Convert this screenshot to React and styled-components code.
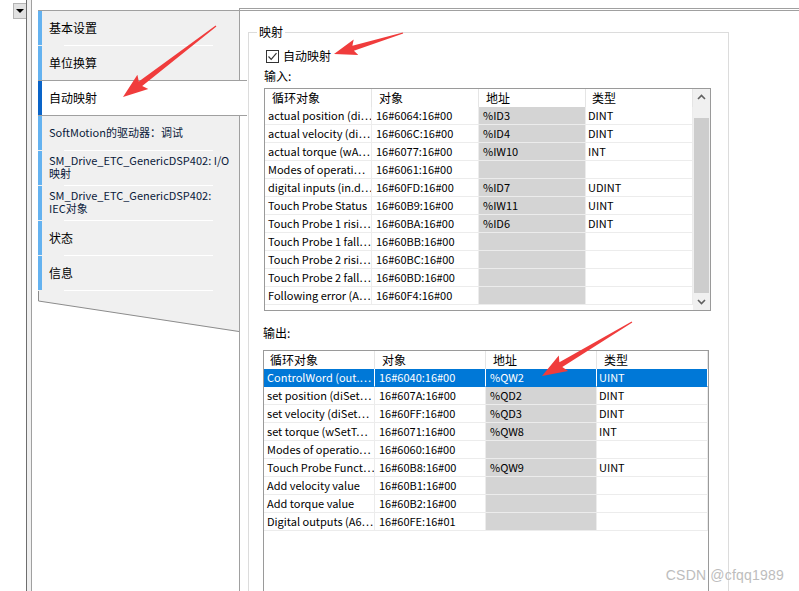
import React from 'react';
import styled, { createGlobalStyle } from 'styled-components';

const UI_FONT = '"Noto Sans CJK SC", "Noto Sans", sans-serif';

const GlobalStyle = createGlobalStyle`
  html, body {
    margin: 0;
    padding: 0;
    background: #fff;
  }
  body {
    font-family: ${UI_FONT};
    font-size: 12px;
    color: #000;
  }
`;

const Window = styled.div`
  position: relative;
  width: 799px;
  height: 591px;
  display: flex;
  overflow: hidden;
  background: #fff;
`;

const Gutter = styled.div`
  width: 26px;
  flex: none;
  display: flex;
  justify-content: flex-end;
  align-items: flex-start;
  padding-top: 3px;
  box-sizing: border-box;
`;

const DropButton = styled.div`
  width: 13px;
  height: 16px;
  box-sizing: border-box;
  background: #e1e1e1;
  border: 1px solid #b4b4b4;
  border-right: none;
  display: flex;
  align-items: center;
  justify-content: center;

  &::after {
    content: '';
    border-left: 4px solid transparent;
    border-right: 4px solid transparent;
    border-top: 4px solid #000;
  }
`;

const Splitter = styled.div`
  width: 6px;
  flex: none;
  box-sizing: border-box;
  background: #f0f0f0;
  border-left: 1px solid #6e6e6e;
  border-right: 1px solid #a0a0a0;
`;

const TabColumn = styled.div`
  width: 207px;
  flex: none;
  padding: 10px 0 0 6px;
  box-sizing: border-box;
  position: relative;
  z-index: 2;
`;

const TabStrip = styled.div`
  display: flex;
  flex-direction: column;
  border-top: 1px solid #a0a0a0;
`;

const Tab = styled.div`
  position: relative;
  height: ${p => (p.$selected ? 36 : p.$sep ? 35 : 34)}px;
  box-sizing: border-box;
  background: ${p => (p.$selected ? '#fff' : '#f0f0f0')};
  margin-right: ${p => (p.$selected ? '-8px' : '0')};
  border-top: ${p => (p.$selected ? '1px solid #a0a0a0' : 'none')};
  border-bottom: ${p => (p.$selected ? '1px solid #a0a0a0' : 'none')};
  padding: 0 2px ${p => (p.$sep ? 3 : 2)}px 11px;
  display: flex;
  flex-direction: column;
  justify-content: center;
  font-size: ${p => (p.$latin ? 11 : 12)}px;
  line-height: 13px;
  white-space: nowrap;
  color: ${p => (p.$latin ? '#0a1a3a' : '#000')};

  &::before {
    content: '';
    position: absolute;
    left: 0;
    top: 0;
    bottom: ${p => (p.$sep ? 1 : 0)}px;
    width: 4px;
    background: ${p => (p.$selected ? '#0a64c8' : '#64b2f0')};
  }

  &::after {
    content: '';
    display: ${p => (p.$sep ? 'block' : 'none')};
    position: absolute;
    left: 26px;
    right: 26px;
    bottom: 0;
    height: 1px;
    background: #fff;
  }
`;

const TabLine = styled.div`
  height: 13px;
`;

const TabFoot = styled.svg`
  display: block;
`;

const Content = styled.div`
  flex: 1;
  margin-top: 8px;
  border-top: 3px double #a0a0a0;
  border-left: 1px solid #a0a0a0;
  padding: 21px 0 0 8px;
  display: flex;
  flex-direction: column;
  min-width: 0;
`;

const GroupBox = styled.div`
  position: relative;
  width: 481px;
  flex: 1;
  box-sizing: border-box;
  border: 1px solid #dcdcdc;
  border-bottom: none;
  padding: 16px 0 0 0;
  display: flex;
  flex-direction: column;
`;

const GroupLegend = styled.span`
  position: absolute;
  top: -9px;
  left: 8px;
  padding: 0 2px;
  background: #fff;
  font-size: 12px;
  line-height: 15px;
`;

const CheckRow = styled.label`
  display: flex;
  align-items: center;
  gap: 4px;
  margin-left: 17px;
  height: 14px;
  font-size: 12px;
  line-height: 14px;
`;

const CheckBox = styled.span`
  width: 13px;
  height: 13px;
  box-sizing: border-box;
  border: 1px solid #333;
  background: #fff;
  display: flex;
  align-items: center;
  justify-content: center;
`;

const SectionLabel = styled.div`
  margin: ${p => p.$top}px 0 0 ${p => p.$left}px;
  font-size: 12px;
  line-height: 16px;
`;

const ListView = styled.div`
  margin: ${p => p.$top}px 0 0 ${p => p.$left}px;
  width: ${p => p.$width}px;
  height: ${p => p.$height}px;
  flex: none;
  box-sizing: border-box;
  border: 1px solid #9a9a9a;
  display: flex;
  background: #fff;
`;

const Grid = styled.div`
  display: grid;
  grid-template-columns: ${p => p.$cols};
  grid-auto-rows: 18px;
  align-content: start;
`;

const HeadCell = styled.div`
  box-sizing: border-box;
  border-right: 1px solid #e5e5e5;
  padding-left: ${p => p.$pad}px;
  font-size: 12px;
  line-height: 18px;
  white-space: nowrap;
  overflow: hidden;
`;

const Cell = styled.div`
  box-sizing: border-box;
  border-right: 1px solid ${p => (p.$sel ? '#fff' : '#ececec')};
  border-bottom: 1px solid ${p => (p.$sel ? '#0078d7' : '#ececec')};
  background: ${p => (p.$sel ? '#0078d7' : p.$addr ? '#d4d4d4' : '#fff')};
  color: ${p => (p.$sel ? '#fff' : '#000')};
  padding-left: ${p => p.$pad}px;
  font-size: 11px;
  line-height: 17px;
  white-space: nowrap;
  overflow: hidden;
`;

const ScrollBar = styled.div`
  width: 17px;
  flex: none;
  background: #f0f0f0;
  display: flex;
  flex-direction: column;
  align-items: center;
`;

const ScrollArrow = styled.div`
  height: 17px;
  display: flex;
  align-items: center;
  justify-content: center;
`;

const ScrollThumb = styled.div`
  margin-top: 12px;
  width: 15px;
  height: 176px;
  background: #cdcdcd;
`;

const Watermark = styled.div`
  position: absolute;
  right: 15px;
  bottom: 8px;
  font-family: "Liberation Sans", sans-serif;
  font-size: 14px;
  color: #bdbdbd;
  text-shadow: 0 0 1px #fff;
  letter-spacing: 0.2px;
`;

const Annotations = styled.svg`
  position: absolute;
  left: 0;
  top: 0;
  pointer-events: none;
  z-index: 5;
`;

const inputRows = [
  ['actual position (di…', '16#6064:16#00', '%ID3', 'DINT'],
  ['actual velocity (di…', '16#606C:16#00', '%ID4', 'DINT'],
  ['actual torque (wA…', '16#6077:16#00', '%IW10', 'INT'],
  ['Modes of operati…', '16#6061:16#00', '', ''],
  ['digital inputs (in.d…', '16#60FD:16#00', '%ID7', 'UDINT'],
  ['Touch Probe Status', '16#60B9:16#00', '%IW11', 'UINT'],
  ['Touch Probe 1 risi…', '16#60BA:16#00', '%ID6', 'DINT'],
  ['Touch Probe 1 fall…', '16#60BB:16#00', '', ''],
  ['Touch Probe 2 risi…', '16#60BC:16#00', '', ''],
  ['Touch Probe 2 fall…', '16#60BD:16#00', '', ''],
  ['Following error (A…', '16#60F4:16#00', '', ''],
];

const outputRows = [
  ['ControlWord (out.…', '16#6040:16#00', '%QW2', 'UINT'],
  ['set position (diSet…', '16#607A:16#00', '%QD2', 'DINT'],
  ['set velocity (diSet…', '16#60FF:16#00', '%QD3', 'DINT'],
  ['set torque (wSetT…', '16#6071:16#00', '%QW8', 'INT'],
  ['Modes of operatio…', '16#6060:16#00', '', ''],
  ['Touch Probe Funct…', '16#60B8:16#00', '%QW9', 'UINT'],
  ['Add velocity value', '16#60B1:16#00', '', ''],
  ['Add torque value', '16#60B2:16#00', '', ''],
  ['Digital outputs (A6…', '16#60FE:16#01', '', ''],
];

const headers = ['循环对象', '对象', '地址', '类型'];

const MappingTable = ({ rows, cols, headPad, cellPad, selectedIndex = -1 }) => (
  <Grid $cols={cols}>
    {headers.map((h, i) => (
      <HeadCell key={h} $pad={headPad[i]}>{h}</HeadCell>
    ))}
    {rows.map((row, r) =>
      row.map((text, c) => (
        <Cell key={`${r}-${c}`}
              $pad={cellPad[c]}
              $addr={c === 2}
              $sel={r === selectedIndex}>
          {text}
        </Cell>
      ))
    )}
  </Grid>
);

const arrowPoints = (x1, y1, x2, y2, head = 20, headW = 8, shaft = 2.6) => {
  const dx = x2 - x1;
  const dy = y2 - y1;
  const len = Math.hypot(dx, dy);
  const ux = dx / len;
  const uy = dy / len;
  const nx = -uy;
  const ny = ux;
  const bx = x2 - ux * head;
  const by = y2 - uy * head;
  const p = (x, y) => `${x.toFixed(1)},${y.toFixed(1)}`;
  return [
    p(x1 + nx * 0.6, y1 + ny * 0.6),
    p(bx + nx * shaft, by + ny * shaft),
    p(bx - ux * 3 + nx * headW, by - uy * 3 + ny * headW),
    p(x2, y2),
    p(bx - ux * 3 - nx * headW, by - uy * 3 - ny * headW),
    p(bx - nx * shaft, by - ny * shaft),
    p(x1 - nx * 0.6, y1 - ny * 0.6),
  ].join(' ');
};

const tabs = [
  { label: '基本设置', sep: true },
  { label: '单位换算' },
  { label: '自动映射', selected: true },
  { label: 'SoftMotion的驱动器：调试', sep: true, latin: true },
  { label: ['SM_Drive_ETC_GenericDSP402: I/O', '映射'], sep: true, latin: true },
  { label: ['SM_Drive_ETC_GenericDSP402:', 'IEC对象'], sep: true, latin: true },
  { label: '状态', sep: true },
  { label: '信息', sep: true },
];

const App = () => (
  <>
    <GlobalStyle />
    <Window>
      <Gutter>
        <DropButton />
      </Gutter>
      <Splitter />
      <TabColumn>
        <TabStrip>
          {tabs.map((t, i) => (
            <Tab key={i} $sep={t.sep} $selected={t.selected} $latin={t.latin}>
              {Array.isArray(t.label)
                ? t.label.map(line => <TabLine key={line}>{line}</TabLine>)
                : t.label}
            </Tab>
          ))}
        </TabStrip>
        <TabFoot width="201" height="41" viewBox="0 0 201 41">
          <polygon points="0,0 201,0 201,41 0,10" fill="#f0f0f0" />
          <polyline points="0.5,0 0.5,10 201,40.5" fill="none" stroke="#8c8c8c" strokeWidth="1" />
        </TabFoot>
      </TabColumn>
      <Content>
        <GroupBox>
          <GroupLegend>映射</GroupLegend>
          <CheckRow>
            <CheckBox>
              <svg width="11" height="11" viewBox="0 0 11 11">
                <polyline points="1.5,5.5 4.2,8.3 9.5,2.2" fill="none" stroke="#333" strokeWidth="1.2" />
              </svg>
            </CheckBox>
            自动映射
          </CheckRow>
          <SectionLabel $top={5} $left={15}>输入:</SectionLabel>
          <ListView $top={4} $left={15} $width={447} $height={223}>
            <MappingTable rows={inputRows}
                          cols="107px 107px 107px 107px"
                          headPad={[7, 7, 7, 6]}
                          cellPad={[3, 4, 4, 2]} />
            <ScrollBar>
              <ScrollArrow>
                <svg width="9" height="6" viewBox="0 0 9 6">
                  <polyline points="1,5 4.5,1.5 8,5" fill="none" stroke="#606060" strokeWidth="1.6" />
                </svg>
              </ScrollArrow>
              <ScrollThumb />
              <ScrollArrow>
                <svg width="9" height="6" viewBox="0 0 9 6">
                  <polyline points="1,1 4.5,4.5 8,1" fill="none" stroke="#606060" strokeWidth="1.6" />
                </svg>
              </ScrollArrow>
            </ScrollBar>
          </ListView>
          <SectionLabel $top={14} $left={14}>输出:</SectionLabel>
          <ListView $top={9} $left={14} $width={446} $height={260}>
            <MappingTable rows={outputRows}
                          cols="111px 111px 111px 111px"
                          headPad={[6, 7, 7, 7]}
                          cellPad={[3, 4, 4, 2]}
                          selectedIndex={0} />
          </ListView>
        </GroupBox>
      </Content>
      <Annotations width="799" height="591">
        <polygon points={arrowPoints(216, 26, 123, 97, 22, 9, 2.8)} fill="#f03c3c" />
        <polygon points={arrowPoints(403, 33, 334, 54, 20, 8, 2.6)} fill="#f03c3c" />
        <polygon points={arrowPoints(632, 322, 542, 376, 22, 9, 2.8)} fill="#f03c3c" />
      </Annotations>
      <Watermark>CSDN @cfqq1989</Watermark>
    </Window>
  </>
);

export default App;
